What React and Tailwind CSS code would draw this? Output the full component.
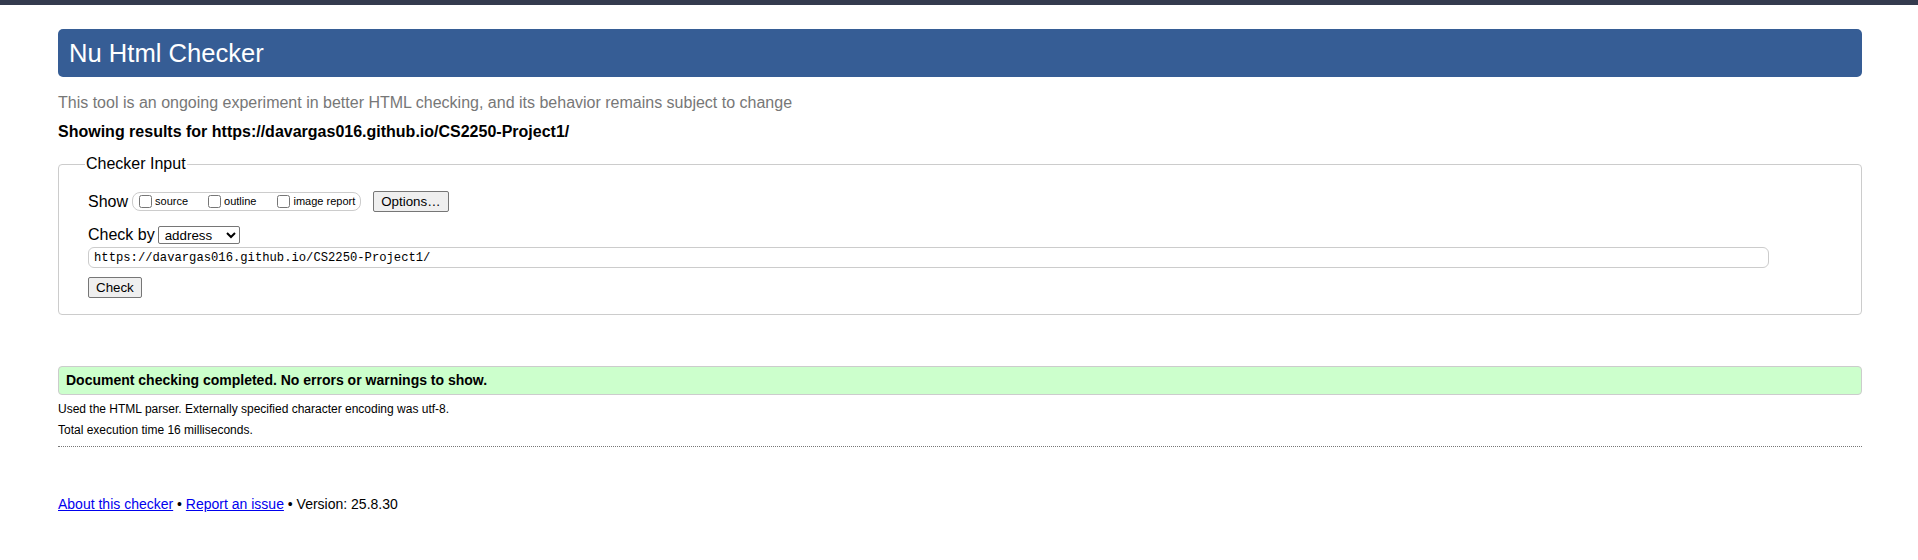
import { useState } from 'react'

export default function App() {
  const [url, setUrl] = useState('https://davargas016.github.io/CS2250-Project1/')

  return (
    <div className="min-h-screen bg-white text-black font-['Liberation_Sans',Arial,sans-serif]">
      <div className="h-[5px] bg-[#343b4e]" />
      <div className="pl-[58px] pr-[56px]">
        <h1 className="mt-[24px] h-[48px] flex items-center pl-[11px] bg-[#365d95] rounded-[5px] text-white text-[25.6px] font-normal">
          Nu Html Checker
        </h1>
        <p className="mt-[16px] text-[16px] leading-[20px] text-[#777]">
          This tool is an ongoing experiment in better HTML checking, and its behavior remains subject to change
        </p>
        <p className="mt-[9px] text-[16px] leading-[20px] font-bold">
          Showing results for https://davargas016.github.io/CS2250-Project1/
        </p>

        <fieldset className="mt-[13px] border border-[#ccc] rounded-[4px] px-[29px] pb-[16px]">
          <legend className="text-[16px] leading-[18px] px-[1px] -ml-[3px]">Checker Input</legend>

          <div className="mt-[18px] h-[21px] flex items-center">
            <span className="text-[16px]">Show</span>
            <div className="ml-[4px] h-[19px] flex items-center border border-[#ccc] rounded-[8px] pl-[6px] pr-[5px] text-[11px]">
              <label className="flex items-center">
                <input type="checkbox" className="w-[13px] h-[13px] m-0" />
                <span className="ml-[3px]">source</span>
              </label>
              <label className="flex items-center ml-[20px]">
                <input type="checkbox" className="w-[13px] h-[13px] m-0" />
                <span className="ml-[3px]">outline</span>
              </label>
              <label className="flex items-center ml-[21px]">
                <input type="checkbox" className="w-[13px] h-[13px] m-0" />
                <span className="ml-[3px]">image report</span>
              </label>
            </div>
            <button className="ml-[12px] h-[21px] px-[7px] text-[13.33px] bg-[#efefef] border border-[#767676] rounded-[2px]">
              Options…
            </button>
          </div>

          <div className="mt-[13px] h-[19px] flex items-center">
            <span className="text-[16px]">Check by</span>
            <select className="ml-[3px] h-[18px] w-[82px] text-[13.33px] text-black bg-white border border-[#767676] rounded-[2px] pl-[2px]">
              <option>address</option>
              <option>file upload</option>
              <option>text input</option>
            </select>
          </div>

          <input
            type="text"
            value={url}
            onChange={(e) => setUrl(e.target.value)}
            className="mt-[3px] block w-[1681px] h-[21px] border border-[#ccc] rounded-[6px] px-[5px] text-[12.2px] font-['Liberation_Mono',monospace] outline-none"
          />

          <button className="mt-[9px] block h-[21px] px-[7px] text-[13.33px] bg-[#efefef] border border-[#767676] rounded-[2px]">
            Check
          </button>
        </fieldset>

        <div className="mt-[51px] h-[29px] flex items-center pl-[7px] bg-[#ccffcc] border border-[#ccc] rounded-[4px] text-[14px] font-bold">
          Document checking completed. No errors or warnings to show.
        </div>
        <p className="mt-[4px] text-[12px] leading-[21px]">
          Used the HTML parser. Externally specified character encoding was utf-8.
        </p>
        <p className="text-[12px] leading-[21px]">Total execution time 16 milliseconds.</p>
        <div className="mt-[5px] border-t border-dotted border-[#777]" />

        <p className="mt-[47px] text-[14px] leading-[20px]">
          <a href="#" className="text-[#0000ee] underline">About this checker</a>
          {' • '}
          <a href="#" className="text-[#0000ee] underline">Report an issue</a>
          {' • Version: 25.8.30'}
        </p>
      </div>
    </div>
  )
}
